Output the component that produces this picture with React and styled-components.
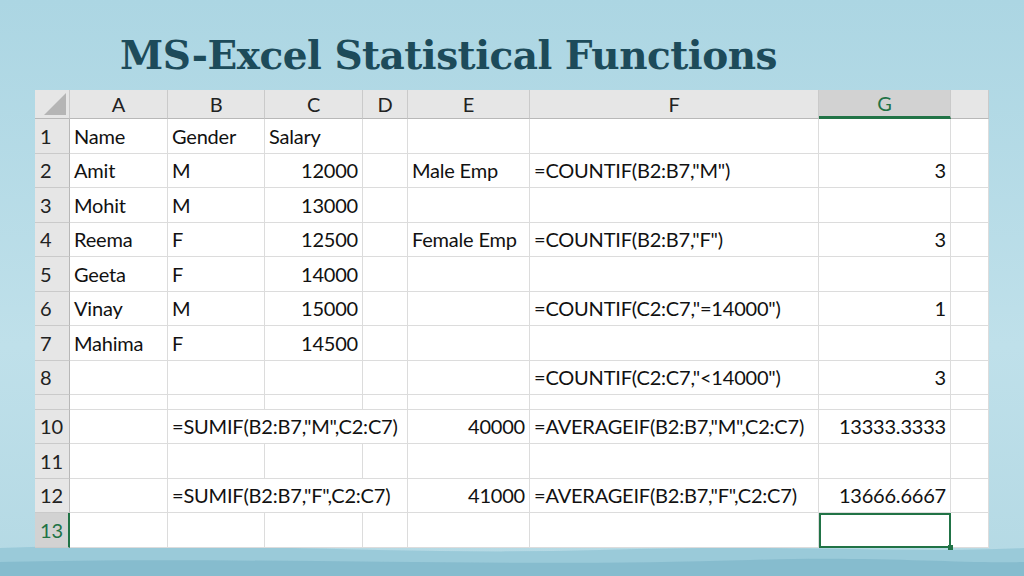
import React from 'react';
import styled, { createGlobalStyle } from 'styled-components';

const Global = createGlobalStyle`
  body { margin: 0; font-family: Lato, "Open Sans", sans-serif; }
`;

const Page = styled.div`
  width: 1024px;
  height: 576px;
  overflow: hidden;
  position: relative;
  background: linear-gradient(180deg, #acd6e3 0%, #bfe0ea 60%, #b4d9e4 100%);
  display: flex;
  flex-direction: column;
`;

const Wave = styled.svg`
  position: absolute;
  left: 0;
  bottom: 0;
`;

const Title = styled.h1`
  margin: 30px 0 0 120px;
  height: 60px;
  font-family: "DejaVu Serif", serif;
  font-weight: 700;
  font-size: 39px;
  letter-spacing: -0.5px;
  color: #1d4b5a;
  line-height: 50px;
`;

const Sheet = styled.div`
  position: relative;
  margin-left: 35px;
  width: 954px;
  display: grid;
  grid-template-columns: 35px 98px 97px 98px 45px 122px 289px 132px 38px;
  grid-template-rows: 29px repeat(8, 34.5px) 14.5px repeat(4, 34.5px);
  background: #fff;
  font-family: Lato, "Open Sans", sans-serif;
  font-size: 20px;
  letter-spacing: -0.2px;
  color: #111;
`;

const Cell = styled.div`
  border-right: 1px solid #dcdcdc;
  border-bottom: 1px solid #dcdcdc;
  display: flex;
  align-items: center;
  justify-content: ${p => (p.$right ? 'flex-end' : 'flex-start')};
  padding: 0 4px;
  white-space: nowrap;
  overflow: hidden;
  grid-column: ${p => p.$span || 'auto'};
  box-sizing: border-box;
`;

const ColHead = styled.div`
  background: ${p => (p.$sel ? '#d2d2d2' : '#e6e6e6')};
  color: ${p => (p.$sel ? '#217346' : '#222')};
  border-right: 1px solid #cacaca;
  border-bottom: ${p => (p.$sel ? '3px solid #217346' : '1px solid #b8b8b8')};
  display: flex;
  align-items: center;
  justify-content: center;
  box-sizing: border-box;
`;

const Corner = styled.div`
  background: #e6e6e6;
  border-right: 1px solid #cacaca;
  border-bottom: 1px solid #b8b8b8;
  position: relative;
  &::after {
    content: '';
    position: absolute;
    right: 3px;
    bottom: 3px;
    border-left: 22px solid transparent;
    border-bottom: 22px solid #b5b5b5;
  }
`;

const RowHead = styled.div`
  background: ${p => (p.$sel ? '#d2d2d2' : '#e6e6e6')};
  color: ${p => (p.$sel ? '#217346' : '#222')};
  border-bottom: 1px solid #cacaca;
  border-right: ${p => (p.$sel ? '2px solid #217346' : '1px solid #b8b8b8')};
  display: flex;
  align-items: center;
  padding-left: 5px;
  overflow: hidden;
  box-sizing: border-box;
  line-height: 1;
`;

const Selected = styled(Cell)`
  border: 2px solid #217346;
  position: relative;
  overflow: visible;
  &::after {
    content: '';
    position: absolute;
    right: -4px;
    bottom: -4px;
    width: 5px;
    height: 5px;
    background: #217346;
  }
`;

const cols = ['A', 'B', 'C', 'D', 'E', 'F', 'G', ''];

// each row: array of [text, right?, span?] for columns A..H
const rows = [
  ['1', [['Name'], ['Gender'], ['Salary'], [], [], [], [], []]],
  ['2', [['Amit'], ['M'], ['12000', 1], [], ['Male Emp'], ['=COUNTIF(B2:B7,"M")'], ['3', 1], []]],
  ['3', [['Mohit'], ['M'], ['13000', 1], [], [], [], [], []]],
  ['4', [['Reema'], ['F'], ['12500', 1], [], ['Female Emp'], ['=COUNTIF(B2:B7,"F")'], ['3', 1], []]],
  ['5', [['Geeta'], ['F'], ['14000', 1], [], [], [], [], []]],
  ['6', [['Vinay'], ['M'], ['15000', 1], [], [], ['=COUNTIF(C2:C7,"=14000")'], ['1', 1], []]],
  ['7', [['Mahima'], ['F'], ['14500', 1], [], [], [], [], []]],
  ['8', [[], [], [], [], [], ['=COUNTIF(C2:C7,"<14000")'], ['3', 1], []]],
  ['9', [[], [], [], [], [], [], [], []]],
  ['10', [[], ['=SUMIF(B2:B7,"M",C2:C7)', 0, 'span 3'], ['40000', 1], ['=AVERAGEIF(B2:B7,"M",C2:C7)'], ['13333.3333', 1], []]],
  ['11', [[], [], [], [], [], [], [], []]],
  ['12', [[], ['=SUMIF(B2:B7,"F",C2:C7)', 0, 'span 3'], ['41000', 1], ['=AVERAGEIF(B2:B7,"F",C2:C7)'], ['13666.6667', 1], []]],
  ['13', [[], [], [], [], [], [], ['sel'], []]],
];

export default function App() {
  return (
    <Page>
      <Global />
      <Wave width="1024" height="70" viewBox="0 0 1024 70">
        <path d="M0 42 C200 34 400 50 600 44 C800 38 900 48 1024 42 L1024 70 L0 70 Z" fill="#8fc3d4" opacity="0.7" />
        <path d="M0 56 C250 50 500 62 750 54 C880 50 960 58 1024 56 L1024 70 L0 70 Z" fill="#7ab3c7" opacity="0.6" />
      </Wave>
      <Title>MS-Excel Statistical Functions</Title>
      <Sheet>
        <Corner />
        {cols.map((c, i) => (
          <ColHead key={i} $sel={c === 'G'}>{c}</ColHead>
        ))}
        {rows.map(([n, cells]) => (
          <React.Fragment key={n}>
            <RowHead $sel={n === '13'}>{n === '9' ? '' : n}</RowHead>
            {cells.map(([t, r, s], i) =>
              t === 'sel' ? (
                <Selected key={i} />
              ) : (
                <Cell key={i} $right={r} $span={s}>{t}</Cell>
              )
            )}
          </React.Fragment>
        ))}
      </Sheet>
    </Page>
  );
}
